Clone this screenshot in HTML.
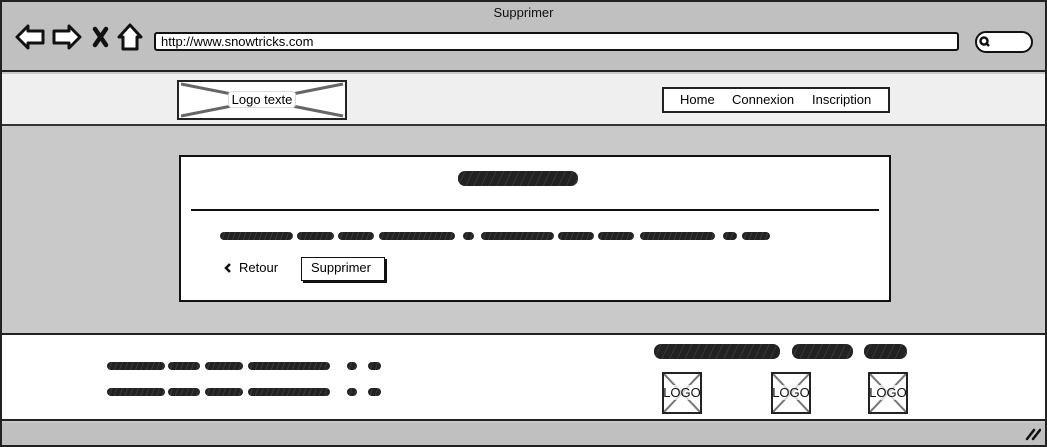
<!DOCTYPE html>
<html><head><meta charset="utf-8"><style>
*{margin:0;padding:0;box-sizing:border-box}
body{width:1047px;height:447px;overflow:hidden;background:#fff;font-family:"Liberation Sans",sans-serif;position:relative}
.a{position:absolute}
.sq{position:absolute;height:8px;border-radius:4px;background:repeating-linear-gradient(110deg,#222 0 4px,#3a3a3a 4px 5px);}
.sqb{position:absolute;height:15px;border-radius:7px;background:repeating-linear-gradient(115deg,#222 0 6px,#383838 6px 7px);}
.logo{position:absolute;width:40px;height:42px;border:2px solid #222;background:#fff;overflow:hidden}
.logo span{position:absolute;left:-2px;top:11px;width:40px;font-size:13px;text-align:center;background:rgba(255,255,255,.7);border-radius:3px;color:#111}
</style></head><body>
<div class="a" style="left:0;top:0;width:1047px;height:447px;border:2px solid #222;background:#c9c9c9"></div>
<div class="a" style="left:2px;top:2px;width:1043px;height:70px;background:#c0c0c0;border-bottom:2px solid #222"></div>
<div class="a" style="left:0;top:5px;width:1047px;text-align:center;font-size:13px;color:#111">Supprimer</div>
<svg class="a" style="left:14px;top:22px" width="135" height="30" viewBox="0 0 135 30">
 <path d="M3 15 L14 4 L14 9 L29 9 L29 21 L14 21 L14 26 Z" fill="#fff" stroke="#111" stroke-width="3" stroke-linejoin="round"/>
 <path d="M66 15 L55 4 L55 9 L40 9 L40 21 L55 21 L55 26 Z" fill="#fff" stroke="#111" stroke-width="3" stroke-linejoin="round"/>
 <path d="M81 7 L92 23 M92 7 L81 23" stroke="#111" stroke-width="4.5" stroke-linecap="round"/>
 <path d="M116 3 L105 15 L109 15 L109 27 L123 27 L123 15 L127 15 Z" fill="#fff" stroke="#111" stroke-width="3" stroke-linejoin="round"/>
</svg>
<div class="a" style="left:154px;top:32px;width:805px;height:19px;background:#fff;border:2px solid #111;border-radius:3px;font-size:13px;padding-left:5px;line-height:15px">http://www.snowtricks.com</div>
<div class="a" style="left:975px;top:31px;width:58px;height:22px;background:#fff;border:2px solid #111;border-radius:11px"></div>
<svg class="a" style="left:978px;top:35px" width="14" height="14"><circle cx="6" cy="6" r="3.5" fill="none" stroke="#111" stroke-width="2.5"/><path d="M8 8 L11 11" stroke="#111" stroke-width="2.5"/></svg>
<div class="a" style="left:2px;top:74px;width:1043px;height:52px;background:#efefef;border-bottom:2px solid #333"></div>
<div class="a" style="left:177px;top:80px;width:170px;height:40px;background:#fff;border:2px solid #222;overflow:hidden">
 <svg class="a" style="left:0;top:0" width="166" height="36"><path d="M2 2 L164 34 M164 2 L2 34" stroke="#666" stroke-width="3"/></svg>
 <div class="a" style="left:49px;top:9px;width:68px;height:17px;background:#fff;border-radius:4px;border:1px solid #ddd;font-size:13px;text-align:center;line-height:15px">Logo texte</div>
</div>
<div class="a" style="left:662px;top:87px;width:228px;height:26px;background:#fff;border:2px solid #222;font-size:13px;line-height:22px">
 <span class="a" style="left:16px">Home</span><span class="a" style="left:68px">Connexion</span><span class="a" style="left:148px">Inscription</span>
</div>
<div class="a" style="left:179px;top:155px;width:712px;height:147px;background:#fff;border:2px solid #111"></div>
<div class="sqb" style="left:458px;top:171px;width:120px"></div>
<div class="a" style="left:191px;top:209px;width:688px;height:2px;background:#111"></div>
<div class="sq" style="left:220px;top:232px;width:73px"></div>
<div class="sq" style="left:297px;top:232px;width:37px"></div>
<div class="sq" style="left:338px;top:232px;width:36px"></div>
<div class="sq" style="left:379px;top:232px;width:76px"></div>
<div class="sq" style="left:463px;top:232px;width:11px"></div>
<div class="sq" style="left:481px;top:232px;width:73px"></div>
<div class="sq" style="left:558px;top:232px;width:36px"></div>
<div class="sq" style="left:598px;top:232px;width:36px"></div>
<div class="sq" style="left:640px;top:232px;width:75px"></div>
<div class="sq" style="left:723px;top:232px;width:14px"></div>
<div class="sq" style="left:742px;top:232px;width:28px"></div>
<svg class="a" style="left:224px;top:263px" width="8" height="10"><path d="M6 1 L2 5 L6 9" fill="none" stroke="#111" stroke-width="2.5"/></svg>
<div class="a" style="left:239px;top:260px;font-size:13px">Retour</div>
<div class="a" style="left:301px;top:257px;width:84px;height:24px;background:#fff;border:1.5px solid #111;box-shadow:2px 2px 0 #111;font-size:13px;line-height:20px;padding-left:9px">Supprimer</div>
<div class="a" style="left:2px;top:333px;width:1043px;height:88px;background:#fff;border-top:2px solid #222;border-bottom:2px solid #222"></div>
<div class="sq" style="left:107px;top:362px;width:58px"></div>
<div class="sq" style="left:168px;top:362px;width:32px"></div>
<div class="sq" style="left:205px;top:362px;width:38px"></div>
<div class="sq" style="left:248px;top:362px;width:82px"></div>
<div class="sq" style="left:347px;top:362px;width:10px"></div>
<div class="sq" style="left:368px;top:362px;width:13px"></div>
<div class="sq" style="left:107px;top:388px;width:58px"></div>
<div class="sq" style="left:168px;top:388px;width:32px"></div>
<div class="sq" style="left:205px;top:388px;width:38px"></div>
<div class="sq" style="left:248px;top:388px;width:82px"></div>
<div class="sq" style="left:347px;top:388px;width:10px"></div>
<div class="sq" style="left:368px;top:388px;width:13px"></div>
<div class="sqb" style="left:654px;top:344px;width:126px"></div>
<div class="sqb" style="left:792px;top:344px;width:61px"></div>
<div class="sqb" style="left:864px;top:344px;width:43px"></div>
<div class="logo" style="left:662px;top:372px"><svg class="a" width="36" height="38"><path d="M0 0 L36 38 M36 0 L0 38" stroke="#777" stroke-width="2"/></svg><span>LOGO</span></div>
<div class="logo" style="left:771px;top:372px"><svg class="a" width="36" height="38"><path d="M0 0 L36 38 M36 0 L0 38" stroke="#777" stroke-width="2"/></svg><span>LOGO</span></div>
<div class="logo" style="left:868px;top:372px"><svg class="a" width="36" height="38"><path d="M0 0 L36 38 M36 0 L0 38" stroke="#777" stroke-width="2"/></svg><span>LOGO</span></div>
<div class="a" style="left:2px;top:423px;width:1043px;height:22px;background:#c0c0c0"></div>
<svg class="a" style="left:1025px;top:427px" width="16" height="14"><path d="M2 12 L9 3 M8 12 L15 3" stroke="#111" stroke-width="2.5" stroke-linecap="round"/></svg>
</body></html>
